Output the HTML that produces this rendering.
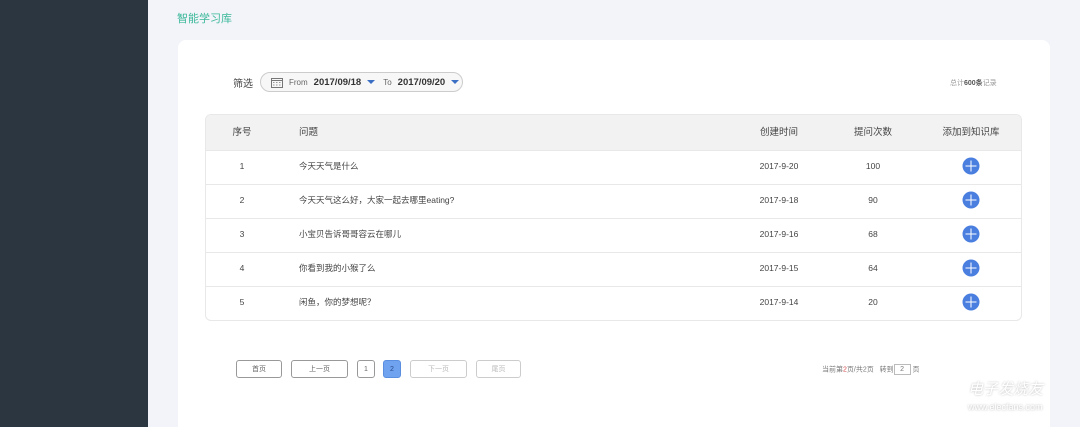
<!DOCTYPE html>
<html><head><meta charset="utf-8"><style>
*{margin:0;padding:0;box-sizing:border-box}
html,body{width:1080px;height:427px;overflow:hidden}
body{background:#f3f4f9;font-family:"Liberation Sans","Noto Sans CJK SC",sans-serif;position:relative;color:#444}
.side{position:absolute;left:0;top:0;width:148px;height:427px;background:#2c3641}
.title{position:absolute;left:177px;top:10px;font-size:11px;color:#3bb89a}
.card{position:absolute;left:178px;top:40px;width:872px;height:387px;background:#fff;border-radius:8px 8px 0 0}
.abs{position:absolute}
.filter{left:233px;top:75px;font-size:10px;color:#444}
.pill{left:260px;top:72px;width:203px;height:20px;border:1px solid #ccc;border-radius:10px;background:#f7f7f7;font-size:9px;display:flex;align-items:center;padding-left:10px;gap:6px}
.pill b{font-size:9.5px;color:#333}
.tri{display:inline-block;width:0;height:0;border-left:4px solid transparent;border-right:4px solid transparent;border-top:4px solid #3a6fc4}
.total{left:950px;top:78px;font-size:7px;color:#999}
.table{left:205px;top:114px;width:817px;height:207px;border:1px solid #e8e8e8;border-radius:6px;overflow:hidden}
.th{height:35px;background:#f2f2f2;position:relative;font-size:9.5px;color:#444}
.tr{height:34px;border-top:1px solid #e8e8e8;position:relative;font-size:8.5px;color:#444}
.c{position:absolute;top:45%;transform:translate(-50%,-50%);white-space:nowrap}
.l{position:absolute;top:45%;transform:translateY(-50%);white-space:nowrap}
.plus{width:17px;height:17px;border-radius:50%;background:#4a7fe0;position:absolute;top:45%;left:765px;transform:translate(-50%,-50%)}
.plus:before{content:"";position:absolute;left:3px;top:8px;width:11px;height:1.3px;background:#fff}
.plus:after{content:"";position:absolute;left:8px;top:3px;width:1.3px;height:11px;background:#fff}
.btn{position:absolute;top:360px;height:18px;border:1px solid #999;border-radius:3px;font-size:7px;color:#666;display:flex;align-items:center;justify-content:center;background:#fff}
.dis{border-color:#ccc;color:#bbb}
</style></head><body>
<div class="side"></div>
<div class="title">智能学习库</div>
<div class="card"></div>
<div class="abs filter">筛选</div>
<div class="abs pill"><svg width="12" height="11" viewBox="0 0 12 11"><rect x="0.5" y="1.5" width="11" height="9" fill="none" stroke="#777"/><line x1="0.5" y1="3.5" x2="11.5" y2="3.5" stroke="#777"/><g fill="#999"><rect x="2" y="5" width="1.5" height="1"/><rect x="5" y="5" width="1.5" height="1"/><rect x="8" y="5" width="1.5" height="1"/><rect x="2" y="7.5" width="1.5" height="1"/><rect x="5" y="7.5" width="1.5" height="1"/><rect x="8" y="7.5" width="1.5" height="1"/></g></svg><span style="color:#666;font-size:8px">From</span><b>2017/09/18</b><span class="tri"></span><span style="color:#666;font-size:8px;margin-left:2px">To</span><b>2017/09/20</b><span class="tri"></span></div>
<div class="abs total">总计<b style="color:#555">600条</b>记录</div>
<div class="abs table">
<div class="th"><span class="c" style="left:36px">序号</span><span class="l" style="left:93px">问题</span><span class="c" style="left:573px">创建时间</span><span class="c" style="left:667px">提问次数</span><span class="c" style="left:765px">添加到知识库</span></div>
<div class="tr"><span class="c" style="left:36px">1</span><span class="l" style="left:93px">今天天气是什么</span><span class="c" style="left:573px">2017-9-20</span><span class="c" style="left:667px">100</span><span class="plus"></span></div>
<div class="tr"><span class="c" style="left:36px">2</span><span class="l" style="left:93px">今天天气这么好，大家一起去哪里eating?</span><span class="c" style="left:573px">2017-9-18</span><span class="c" style="left:667px">90</span><span class="plus"></span></div>
<div class="tr"><span class="c" style="left:36px">3</span><span class="l" style="left:93px">小宝贝告诉哥哥容云在哪儿</span><span class="c" style="left:573px">2017-9-16</span><span class="c" style="left:667px">68</span><span class="plus"></span></div>
<div class="tr"><span class="c" style="left:36px">4</span><span class="l" style="left:93px">你看到我的小猴了么</span><span class="c" style="left:573px">2017-9-15</span><span class="c" style="left:667px">64</span><span class="plus"></span></div>
<div class="tr"><span class="c" style="left:36px">5</span><span class="l" style="left:93px">闲鱼，你的梦想呢？</span><span class="c" style="left:573px">2017-9-14</span><span class="c" style="left:667px">20</span><span class="plus"></span></div>
</div>
<div class="btn" style="left:236px;width:46px">首页</div>
<div class="btn" style="left:291px;width:57px">上一页</div>
<div class="btn" style="left:357px;width:18px">1</div>
<div class="btn" style="left:383px;width:18px;background:#6fa3f0;border-color:#5a8fe0;color:#2a4a8a">2</div>
<div class="btn dis" style="left:410px;width:57px">下一页</div>
<div class="btn dis" style="left:476px;width:45px">尾页</div>
<div class="abs" style="left:822px;top:364px;font-size:7px;color:#777">当前第<span style="color:#d04a4a">2</span>页/共2页 &nbsp;&nbsp;转到<span style="display:inline-block;border:1px solid #bbb;width:17px;height:11px;text-align:center;line-height:10px;vertical-align:middle">2</span> 页</div>
<div class="abs" style="left:968px;top:378px;font-size:15px;color:#fff;text-shadow:0 0 2px #bbb;font-style:italic">电子发烧友</div>
<div class="abs" style="left:968px;top:402px;font-size:9px;color:#fff;text-shadow:0 0 2px #aaa">www.elecfans.com</div>
</body></html>
